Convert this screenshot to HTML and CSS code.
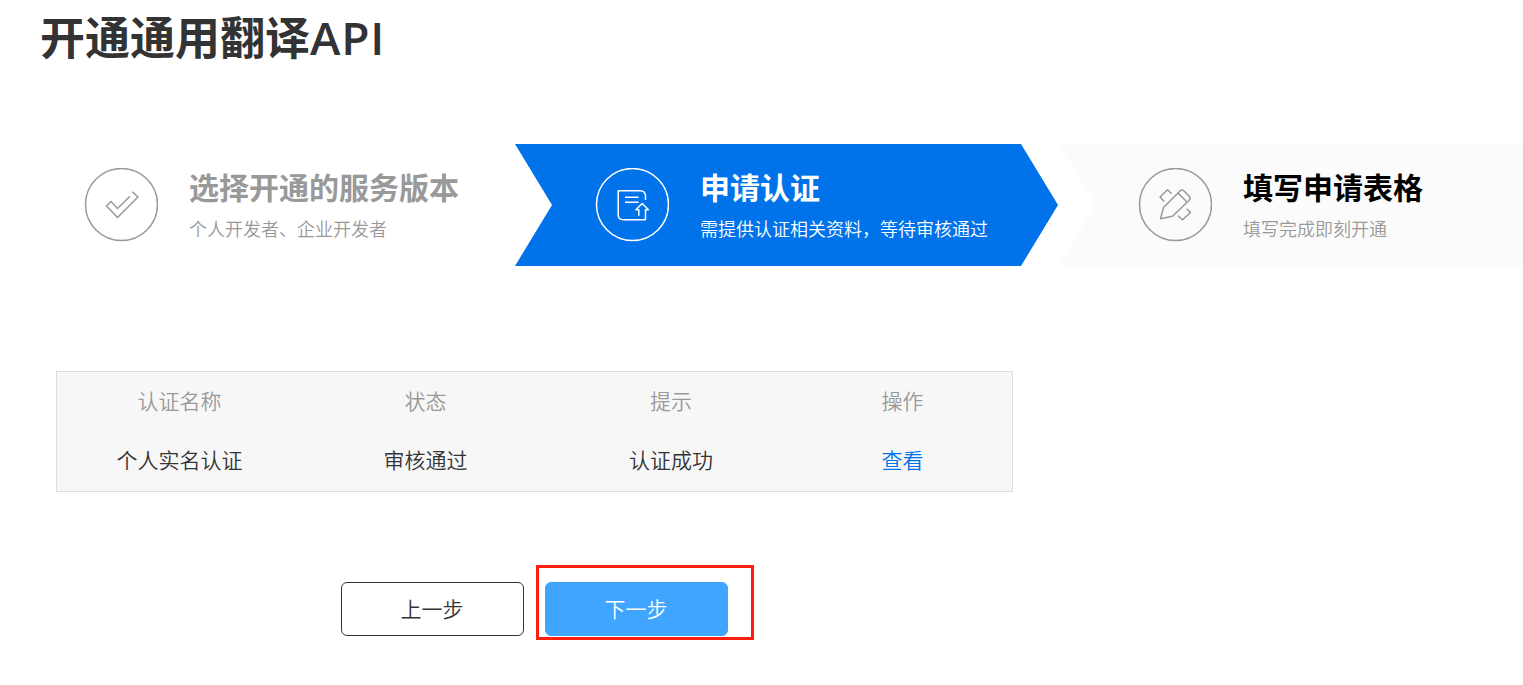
FILE: index.html
```html
<!DOCTYPE html>
<html lang="zh-CN">
  <head>
    <meta charset="UTF-8" />
    <meta name="viewport" content="width=device-width, initial-scale=1.0" />
    <title>开通通用翻译API</title>
    <link rel="stylesheet" href="styles.css">
  </head>
  <body>
    <h1>开通通用翻译<span class="latin">API</span></h1>

    <div class="steps">
      <div class="step step-done">
        <svg class="step-icon" viewBox="-0.5 0.5 74 74">
          <circle cx="37" cy="37" r="36" />
          <path d="M45.5 28.8L33 41L26.5 34L22 38.5L33 50L53.5 29.5L48 24.2" />
        </svg>
        <div class="step-text">
          <h2>选择开通的服务版本</h2>
          <p>个人开发者、企业开发者</p>
        </div>
      </div>
      <div class="step step-active">
        <svg class="step-icon" viewBox="-0.5 0.5 74 74">
          <circle cx="37" cy="37" r="36" />
          <path d="M50 32.5V28.5Q50 23.2 44.5 23.2H22.7V47.5Q22.7 52.2 27.7 52.2H50V42.3H53L46.7 36L40.4 42.3H43.3V48.3" />
          <path d="M29.5 29.7H43M29.5 34.7H43" />
        </svg>
        <div class="step-text">
          <h2>申请认证</h2>
          <p>需提供认证相关资料，等待审核通过</p>
        </div>
      </div>
      <div class="step step-next">
        <svg class="step-icon" viewBox="-0.5 0.5 74 74">
          <circle cx="37" cy="37" r="36" />
          <path d="M25 40L41.5 23.5Q43.5 21.5 45.5 23.5L50.8 28.8Q52.5 31 50.5 33L34 48.7L22 51.3Z" />
          <path d="M39.5 25.5L48.5 34.5" />
          <path d="M25.7 34.1L21.5 29.5L29 22.2L33.2 26.2M48.2 41.2L52 45L44 52.3L39.5 48.2" />
        </svg>
        <div class="step-text">
          <h2>填写申请表格</h2>
          <p>填写完成即刻开通</p>
        </div>
      </div>
    </div>

    <table class="auth-table">
      <colgroup>
        <col class="col-name" />
        <col class="col-status" />
        <col class="col-tip" />
        <col class="col-action" />
      </colgroup>
      <thead>
        <tr>
          <th>认证名称</th>
          <th>状态</th>
          <th>提示</th>
          <th>操作</th>
        </tr>
      </thead>
      <tbody>
        <tr>
          <td>个人实名认证</td>
          <td>审核通过</td>
          <td>认证成功</td>
          <td><a href="#">查看</a></td>
        </tr>
      </tbody>
    </table>

    <div class="actions">
      <button type="button" class="btn">上一步</button>
      <div class="next-wrap">
        <button type="button" class="btn btn-primary">下一步</button>
        <span class="highlight"></span>
      </div>
    </div>
  </body>
</html>
```

FILE: styles.css
```css
body {
  font-family: "Open Sans", "Noto Sans CJK SC", sans-serif;
  font-weight: 350;
  background-color: #ffffff;
  color: #333333;
  margin: 0;
}

h1 {
  margin: 0;
  padding: 8px 0 0 40px;
  font-size: 45px;
  line-height: 60px;
  font-weight: bold;
}

.latin {
  font-weight: 650;
  font-size: 46px;
  line-height: 1;
  letter-spacing: 0.8px;
}

.steps {
  display: flex;
  margin-top: 76px;
  height: 122px;
}

.step {
  box-sizing: border-box;
  display: flex;
  align-items: center;
  color: #999999;
}

.step-done {
  width: 515px;
  padding-left: 84px;
}

.step-active {
  width: 543px;
  padding-left: 80px;
  background-color: #0073eb;
  color: #ffffff;
  clip-path: polygon(0 0, 506px 0, 100% 50%, 506px 100%, 0 100%, 37px 50%);
}

.step-next {
  flex: 1;
  padding-left: 80px;
  background-color: #fbfbfb;
  clip-path: polygon(1px 0, 100% 0, 100% 100%, 1px 100%, 38px 50%);
}

.step-icon {
  width: 74px;
  height: 74px;
  flex: none;
  fill: none;
  stroke: currentColor;
  stroke-width: 1.5;
  stroke-linejoin: round;
}

.step-text {
  margin: 1px 0 0 31px;
  white-space: nowrap;
}

.step-text h2 {
  margin: 0;
  font-size: 30px;
  line-height: 42px;
}

.step-text p {
  margin: 4px 0 0;
  font-size: 18px;
  line-height: 32px;
}

.step-next h2 {
  color: #000000;
}

.auth-table {
  width: 957px;
  margin: 105px 0 0 56px;
  table-layout: fixed;
  border: 1px solid #dddddd;
  border-spacing: 0;
  background-color: #f7f7f7;
  font-size: 21px;
  line-height: 30px;
  text-align: center;
}

.col-name,
.col-status {
  width: 246px;
}

.col-tip {
  width: 245px;
}

.auth-table th,
.auth-table td {
  box-sizing: border-box;
  padding: 0 1px 3px 0;
  font-weight: 350;
}

.auth-table th {
  height: 60px;
  color: #999999;
}

.auth-table td {
  height: 59px;
}

.auth-table a {
  color: #0073eb;
  text-decoration: none;
}

.actions {
  display: flex;
  gap: 21px;
  margin: 90px 0 49px 341px;
}

.btn {
  display: block;
  box-sizing: border-box;
  width: 183px;
  height: 54px;
  padding: 0 1px 2px 0;
  border: 1px solid #333333;
  border-radius: 6px;
  background-color: #ffffff;
  color: #333333;
  font-family: inherit;
  font-size: 21px;
  font-weight: 350;
  cursor: pointer;
}

.btn-primary {
  border-color: #40a5ff;
  background-color: #40a5ff;
  color: #ffffff;
}

.next-wrap {
  position: relative;
}

/* red frame round the next button */
.highlight {
  position: absolute;
  box-sizing: border-box;
  top: -17px;
  left: -9px;
  width: 218px;
  height: 75px;
  border: 3px solid #ff1d10;
  pointer-events: none;
}
```
